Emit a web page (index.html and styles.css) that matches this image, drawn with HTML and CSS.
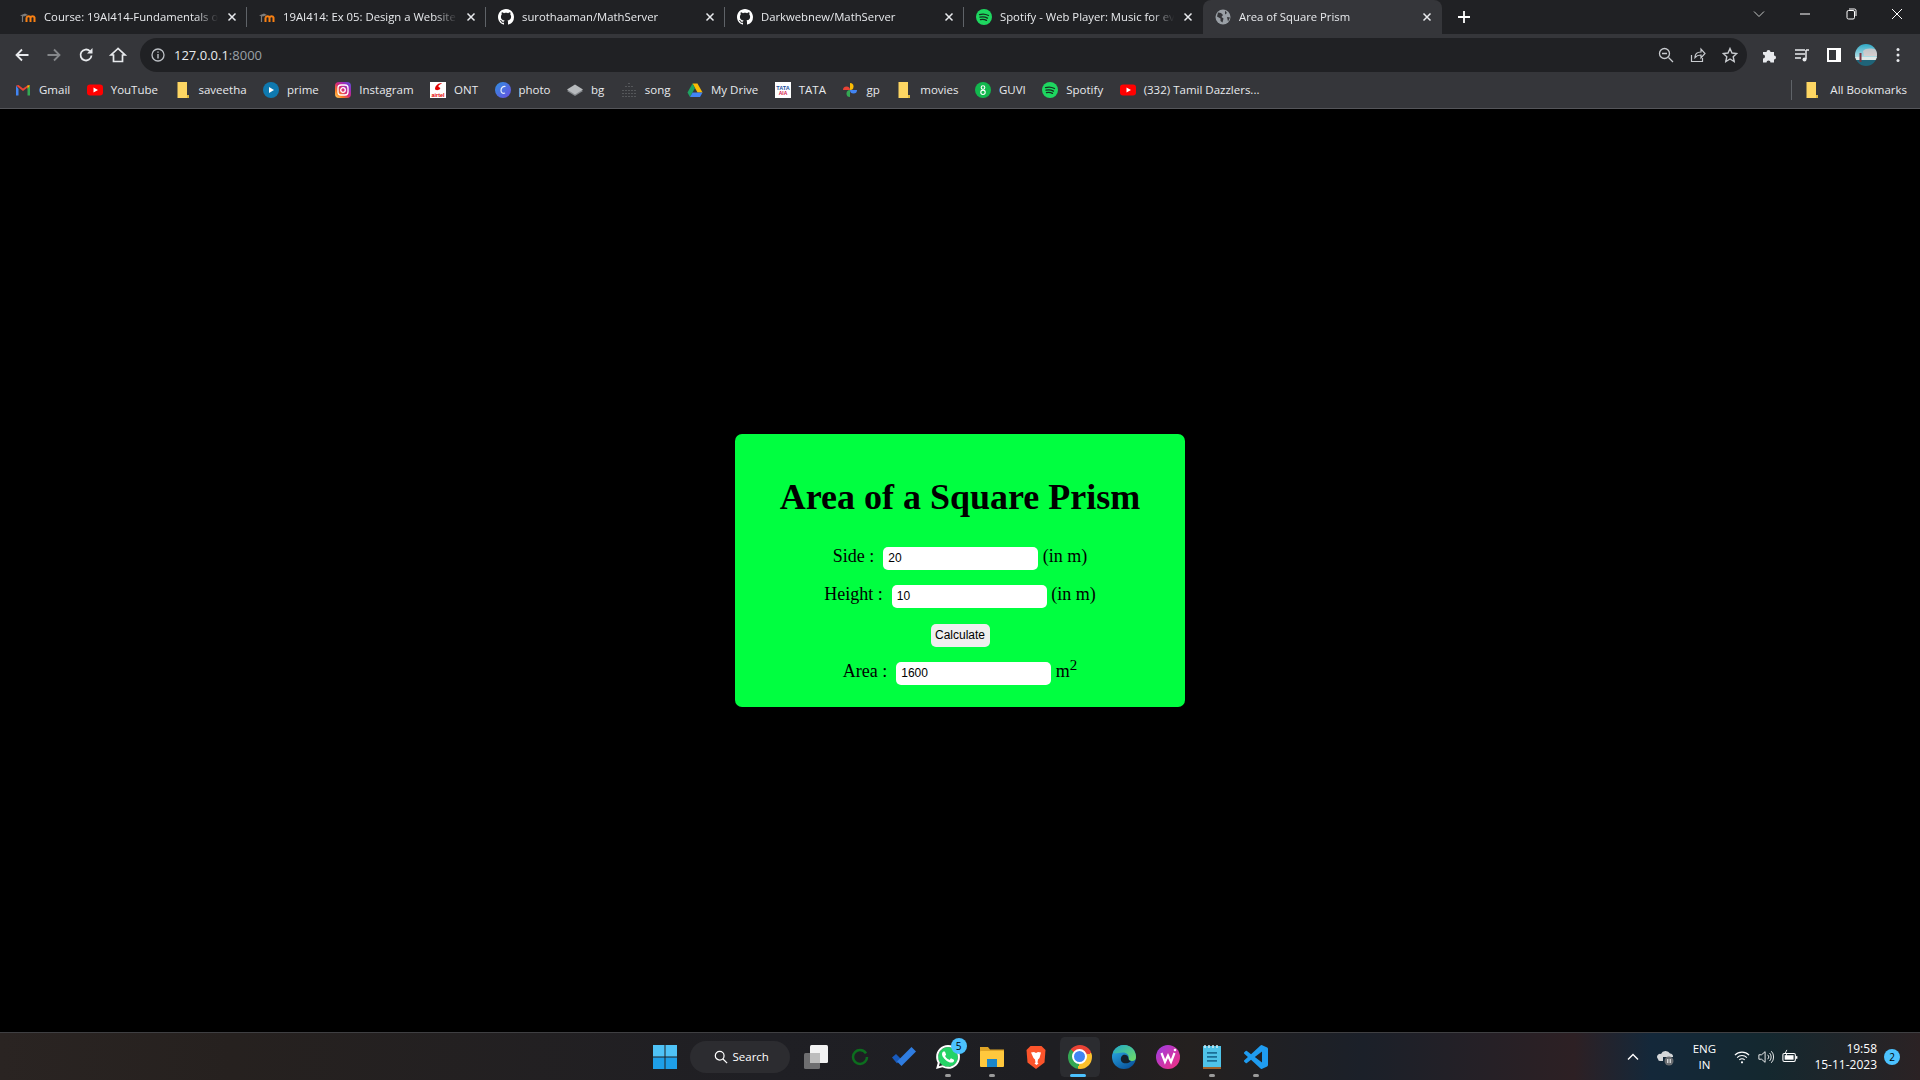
FILE: index.html
```html
<!DOCTYPE html>
<html lang="en">
<head>
    <meta charset="UTF-8">
    <title>Area of Square Prism</title>
    <link rel="stylesheet" href="styles.css">
</head>
<body>
    <!-- shared icons -->
    <svg class="sprite" width="0" height="0">
        <defs>
            <linearGradient id="g-photo" x1="0" y1="0" x2="1" y2="1"><stop offset="0" stop-color="#2f8fe0"/><stop offset="1" stop-color="#6a4fe0"/></linearGradient>
            <linearGradient id="g-wps" x1="0" y1="0" x2="1" y2="1"><stop offset="0" stop-color="#9a3de6"/><stop offset="1" stop-color="#f52f7c"/></linearGradient>
            <linearGradient id="g-edge" x1="0" y1="0" x2="0.6" y2="1"><stop offset="0" stop-color="#2fb6ee"/><stop offset="1" stop-color="#0b57a0"/></linearGradient>
            <linearGradient id="g-edge-top" x1="0" y1="0" x2="1" y2="1"><stop offset="0" stop-color="#1fa8c9"/><stop offset="1" stop-color="#72de62"/></linearGradient>
            <linearGradient id="g-sky" x1="0" y1="0" x2="0" y2="1"><stop offset="0" stop-color="#2fa9c6"/><stop offset="1" stop-color="#b9e0e6"/></linearGradient>
            <clipPath id="c-avatar"><circle cx="11" cy="11" r="11"/></clipPath>
        </defs>
        <symbol id="i-close" viewBox="0 0 16 16"><path d="M4.500 4.500l7 7M11.500 4.500l-7 7" fill="none" stroke="#e8eaed" stroke-width="1.500"/></symbol>
        <symbol id="i-moodle" viewBox="0 0 16 16"><path d="M0 6.500l5-2 3 1.500-4 1.500z" fill="#7d7d7d"/><path d="M2.500 7v6" stroke="#7d7d7d" stroke-width="1.200"/><path d="M6.500 13V8.500M6.500 8.500c1-1.800 3.500-1.800 4 0V13M10.500 8.500c.8-1.800 3.500-1.800 4 0V13" fill="none" stroke="#f98012" stroke-width="2"/></symbol>
        <symbol id="i-github" viewBox="0 0 16 16"><path fill="#fff" d="M8 0C3.580 0 0 3.580 0 8c0 3.540 2.290 6.530 5.470 7.590.4.070.55-.17.55-.38 0-.19-.01-.82-.01-1.490-2.010.37-2.530-.49-2.690-.94-.09-.23-.48-.94-.82-1.130-.28-.15-.68-.52-.01-.53.63-.01 1.080.58 1.230.82.72 1.210 1.870.87 2.330.66.07-.52.28-.87.51-1.070-1.780-.2-3.640-.89-3.640-3.950 0-.87.31-1.590.82-2.150-.08-.2-.36-1.020.08-2.120 0 0 .67-.21 2.200.82.64-.18 1.320-.27 2-.27.68 0 1.360.09 2 .27 1.530-1.040 2.200-.82 2.200-.82.44 1.100.16 1.920.08 2.120.51.56.82 1.270.82 2.150 0 3.070-1.870 3.750-3.650 3.950.29.25.54.73.54 1.480 0 1.070-.01 1.930-.01 2.200 0 .21.15.46.55.38A8.013 8.013 0 0016 8c0-4.420-3.580-8-8-8z"/></symbol>
        <symbol id="i-spotify" viewBox="0 0 16 16"><circle cx="8" cy="8" r="8" fill="#1ed760"/><path d="M3.500 5.600c3-.9 6.300-.6 9 .9M4 8.200c2.500-.7 5.200-.4 7.500.9M4.500 10.600c2-.5 4.200-.3 6 .8" fill="none" stroke="#14301f" stroke-width="1.300" stroke-linecap="round"/></symbol>
        <symbol id="i-folder" viewBox="0 0 16 16"><path d="M2.500 0h9.500v13l2 1.500v1.500H2.500z" fill="#fdd663"/><path d="M12 13h2v3h-2z" fill="#e0b93f"/></symbol>
        <symbol id="i-youtube" viewBox="0 0 16 16"><rect y="2.500" width="16" height="11" rx="3" fill="#f00"/><path d="M6.500 5.500L11 8l-4.500 2.500z" fill="#fff"/></symbol>
    </svg>

    <div class="tabstrip">
        <div class="tab">
            <svg class="tab-icon"><use href="#i-moodle"/></svg>
            <span class="tab-title">Course: 19AI414-Fundamentals of Web</span>
            <svg class="tab-close"><use href="#i-close"/></svg>
        </div>
        <div class="tab">
            <svg class="tab-icon"><use href="#i-moodle"/></svg>
            <span class="tab-title">19AI414: Ex 05: Design a Website for</span>
            <svg class="tab-close"><use href="#i-close"/></svg>
        </div>
        <div class="tab">
            <svg class="tab-icon"><use href="#i-github"/></svg>
            <span class="tab-title">surothaaman/MathServer</span>
            <svg class="tab-close"><use href="#i-close"/></svg>
        </div>
        <div class="tab">
            <svg class="tab-icon"><use href="#i-github"/></svg>
            <span class="tab-title">Darkwebnew/MathServer</span>
            <svg class="tab-close"><use href="#i-close"/></svg>
        </div>
        <div class="tab tab-before-active">
            <svg class="tab-icon"><use href="#i-spotify"/></svg>
            <span class="tab-title">Spotify - Web Player: Music for everyone</span>
            <svg class="tab-close"><use href="#i-close"/></svg>
        </div>
        <div class="tab tab-active">
            <svg class="tab-icon" viewBox="0 0 16 16"><circle cx="8" cy="8" r="7.500" fill="#9aa0a6"/><path d="M3 3.500l3 .5 2 2-1.500 2 2 1.500-1 4-2-1.500v-2.500L2 7.500zM10 1.500l2 2.500-2 1.500zM12 8l3 .5-2 4z" fill="#35363a"/></svg>
            <span class="tab-title">Area of Square Prism</span>
            <svg class="tab-close"><use href="#i-close"/></svg>
        </div>
        <svg class="new-tab" viewBox="0 0 16 16"><path d="M8 2v12M2 8h12" stroke="#fff" stroke-width="1.800"/></svg>
        <div class="window-controls">
            <svg class="win-btn" viewBox="0 0 12 12"><path d="M1 3.500l5 5 5-5" fill="none" stroke="#c4c7c5" stroke-width="1"/></svg>
            <svg class="win-btn" viewBox="0 0 12 12"><path d="M1 6h10" stroke="#fff" stroke-width="1"/></svg>
            <svg class="win-btn" viewBox="0 0 12 12"><rect x="2" y="2.500" width="7.500" height="8.500" rx="1.500" fill="none" stroke="#fff"/><path d="M4 1h5.500A1.500 1.500 0 0 1 11 2.500V8" fill="none" stroke="#fff"/></svg>
            <svg class="win-btn" viewBox="0 0 12 12"><path d="M1 1l10 10M11 1L1 11" stroke="#fff" stroke-width="1"/></svg>
        </div>
    </div>

    <div class="toolbar">
        <div class="nav-buttons">
            <svg class="tool-icon" viewBox="0 0 16 16"><path d="M14.500 8H2.500M8 2.500L2.500 8 8 13.500" fill="none" stroke="#e8eaed" stroke-width="1.800"/></svg>
            <svg class="tool-icon" viewBox="0 0 16 16"><path d="M1.500 8h12M8 2.500L13.500 8 8 13.500" fill="none" stroke="#85878a" stroke-width="1.800"/></svg>
            <svg class="tool-icon" viewBox="0 0 16 16"><path d="M13.500 8.500a5.500 5.500 0 1 1-1.600-4.400" fill="none" stroke="#e8eaed" stroke-width="1.800"/><path d="M14.500 1v5.500H9z" fill="#e8eaed"/></svg>
            <svg class="tool-icon" viewBox="0 0 16 16"><path d="M8 1.500L1 8h2.500v6.500h9V8H15z" fill="none" stroke="#e8eaed" stroke-width="1.700"/></svg>
        </div>
        <div class="omnibox">
            <svg class="info-icon" viewBox="0 0 14 14"><circle cx="7" cy="7" r="6" fill="none" stroke="#bdc1c6" stroke-width="1.300"/><path d="M7 6v4.500M7 3.500v1.300" stroke="#bdc1c6" stroke-width="1.400"/></svg>
            <span class="url">127.0.0.1<span class="url-port">:8000</span></span>
            <div class="omni-actions">
                <svg class="omni-icon" viewBox="0 0 16 16"><circle cx="6.500" cy="6.500" r="5" fill="none" stroke="#c8cbcf" stroke-width="1.300"/><path d="M4 6.500h5M10.500 10.500l4.500 4.500" stroke="#c8cbcf" stroke-width="1.300"/></svg>
                <svg class="omni-icon" viewBox="0 0 16 16"><path d="M1.500 8v6.500h11V11" fill="none" stroke="#c8cbcf" stroke-width="1.200"/><path d="M5 10.500c0-3.500 2.500-5.500 6-5.500V2l4 4.500L11 11V8c-2.500 0-4.500.7-6 2.500z" fill="none" stroke="#c8cbcf" stroke-width="1.200"/></svg>
                <svg class="omni-icon" viewBox="0 0 16 16"><path d="M8 1.500l2 4.500 4.800.5-3.600 3.200 1 4.800L8 12l-4.200 2.500 1-4.800L1.200 6.500 6 6z" fill="none" stroke="#c8cbcf" stroke-width="1.400"/></svg>
            </div>
        </div>
        <div class="extensions">
            <svg class="tool-icon" viewBox="0 0 16 16"><path d="M1 5h3.500a2 2 0 1 1 4 0H12v3.500a2 2 0 1 1 0 4V15.500H8.500a2 2 0 1 0-4 0H1V11.500a2 2 0 1 0 0-4z" fill="#e8eaed"/></svg>
            <svg class="tool-icon" viewBox="0 0 16 16"><path d="M1 3h10M1 7h10M1 11h6" stroke="#e8eaed" stroke-width="1.500"/><path d="M12 3v9" stroke="#e8eaed" stroke-width="1.500"/><circle cx="10.500" cy="12.500" r="2" fill="#e8eaed"/><path d="M12 3h3" stroke="#e8eaed" stroke-width="1.500"/></svg>
            <svg class="tool-icon" viewBox="0 0 16 16"><path fill-rule="evenodd" d="M1 1h14v14H1zM3 3v10h7V3z" fill="#fff"/></svg>
            <svg class="avatar" viewBox="0 0 22 22"><g clip-path="url(#c-avatar)"><rect width="22" height="14" fill="url(#g-sky)"/><path d="M8 7c3-3 8-3 14-1v6H9z" fill="#e9c9c4" opacity=".7"/><rect y="13" width="22" height="3" fill="#dfe8e6"/><rect y="16" width="22" height="6" fill="#1f6478"/><rect x="4.500" y="9" width="2" height="9" fill="#7a3440"/></g></svg>
            <svg class="tool-icon" viewBox="0 0 16 16"><circle cx="8" cy="2.500" r="1.500" fill="#e8eaed"/><circle cx="8" cy="8" r="1.500" fill="#e8eaed"/><circle cx="8" cy="13.500" r="1.500" fill="#e8eaed"/></svg>
        </div>
    </div>

    <div class="bookmarks">
        <div class="mark">
            <svg class="mark-icon" viewBox="0 0 16 16"><path d="M1 3.500v10h2.500V7z" fill="#4285f4"/><path d="M12.500 13.500H15v-10L12.500 7z" fill="#34a853"/><path d="M1 3.500L8 9l7-5.500-2.500 0L8 6.500 3.500 3z" fill="#ea4335"/><path d="M12.500 3.200L15 3.500 12.500 7z" fill="#fbbc04"/></svg>
            <span>Gmail</span>
        </div>
        <div class="mark"><svg class="mark-icon"><use href="#i-youtube"/></svg><span>YouTube</span></div>
        <div class="mark"><svg class="mark-icon"><use href="#i-folder"/></svg><span>saveetha</span></div>
        <div class="mark">
            <svg class="mark-icon" viewBox="0 0 16 16"><circle cx="8" cy="8" r="8" fill="#0f79af"/><path d="M6 5l5 3-5 3z" fill="#fff"/></svg>
            <span>prime</span>
        </div>
        <div class="mark">
            <div class="instagram"><svg viewBox="0 0 16 16"><rect x="3" y="3" width="10" height="10" rx="3" fill="none" stroke="#fff" stroke-width="1.300"/><circle cx="8" cy="8" r="2.300" fill="none" stroke="#fff" stroke-width="1.300"/></svg></div>
            <span>Instagram</span>
        </div>
        <div class="mark">
            <svg class="mark-icon" viewBox="0 0 16 16"><rect width="16" height="16" fill="#fff"/><path d="M5 7c0-3 3-6 7-6-1 1.500-4 2-3.500 3.500.5 1.500 2.500.5 1.500 2.500-1 1.500-5 1.500-5 0z" fill="#e40000"/><text x="8" y="15" class="logo-text logo-airtel">airtel</text></svg>
            <span>ONT</span>
        </div>
        <div class="mark">
            <svg class="mark-icon" viewBox="0 0 16 16"><circle cx="8" cy="8" r="8" fill="url(#g-photo)"/><path d="M10.500 4.500C8 3.800 6 6 6 8.500s2 3.500 4 2.500" fill="none" stroke="#e8eefc" stroke-width="1.200"/></svg>
            <span>photo</span>
        </div>
        <div class="mark">
            <svg class="mark-icon" viewBox="0 0 16 16"><path d="M8 4l8 5-8 5-8-5z" fill="#85888c"/><path d="M8 2.500l8 5-8 5-8-5z" fill="#b7babd"/></svg>
            <span>bg</span>
        </div>
        <div class="mark">
            <svg class="mark-icon" viewBox="0 0 16 16"><path d="M8 1v1M5 4v1M8 4v1M11 4v1M2 8v1M5 8v1M8 8v1M11 8v1M14 8v1M2 11v1M5 11v1M8 11v1M11 11v1M14 11v1M2 14v1M5 14v1M8 14v1M11 14v1M14 14v1" stroke="#55575a" stroke-width="2"/></svg>
            <span>song</span>
        </div>
        <div class="mark">
            <svg class="mark-icon" viewBox="0 0 16 16"><path d="M5.500 1.500h5L15.500 10.500h-5z" fill="#fbbc04"/><path d="M5.500 1.500L.5 10.500 3 15l5-9z" fill="#1ea362"/><path d="M3 15h10l2.500-4.500h-10z" fill="#4285f4"/></svg>
            <span>My Drive</span>
        </div>
        <div class="mark">
            <svg class="mark-icon" viewBox="0 0 16 16"><rect width="16" height="16" fill="#fff"/><text x="8" y="7.500" class="logo-text logo-tata">TATA</text><text x="8" y="13" class="logo-text logo-aia">AIA</text></svg>
            <span>TATA</span>
        </div>
        <div class="mark">
            <svg class="mark-icon" viewBox="0 0 16 16"><path d="M8 8H1a3.500 3.500 0 0 1 7 0z" fill="#ea4335"/><path d="M8 8H1a3.500 3.500 0 0 1 7 0z" fill="#fbbc04" transform="rotate(90 8 8)"/><path d="M8 8H1a3.500 3.500 0 0 1 7 0z" fill="#4285f4" transform="rotate(180 8 8)"/><path d="M8 8H1a3.500 3.500 0 0 1 7 0z" fill="#34a853" transform="rotate(270 8 8)"/></svg>
            <span>gp</span>
        </div>
        <div class="mark"><svg class="mark-icon"><use href="#i-folder"/></svg><span>movies</span></div>
        <div class="mark">
            <svg class="mark-icon" viewBox="0 0 16 16"><circle cx="8" cy="8" r="8" fill="#12b84e"/><circle cx="8" cy="5.500" r="1.800" fill="none" stroke="#fff" stroke-width="1.100"/><circle cx="8" cy="10.300" r="2.200" fill="none" stroke="#fff" stroke-width="1.100"/></svg>
            <span>GUVI</span>
        </div>
        <div class="mark"><svg class="mark-icon"><use href="#i-spotify"/></svg><span>Spotify</span></div>
        <div class="mark"><svg class="mark-icon"><use href="#i-youtube"/></svg><span>(332) Tamil Dazzlers...</span></div>
        <div class="all-bookmarks">
            <svg class="mark-icon"><use href="#i-folder"/></svg>
            <span>All Bookmarks</span>
        </div>
    </div>

    <main class="page">
        <form class="card">
            <h1 class="card-title">Area of a Square Prism</h1>
            <div class="row">Side : &nbsp;<input class="field" type="text" value="20"> (in m)</div>
            <div class="row">Height : &nbsp;<input class="field" type="text" value="10"> (in m)</div>
            <div class="row row-button"><button class="calc-btn" type="button">Calculate</button></div>
            <div class="row">Area : &nbsp;<input class="field" type="text" value="1600"> m<sup class="power">2</sup></div>
        </form>
    </main>

    <footer class="taskbar">
        <div></div>
        <div class="task-center">
            <div class="task-item">
                <svg class="task-icon" viewBox="0 0 24 24"><rect width="11.500" height="11.500" fill="#4fc3f7"/><rect x="12.500" width="11.500" height="11.500" fill="#4fc3f7"/><rect y="12.500" width="11.500" height="11.500" fill="#1e9fe8"/><rect x="12.500" y="12.500" width="11.500" height="11.500" fill="#1e9fe8"/></svg>
            </div>
            <div class="search-pill">
                <svg class="search-icon" viewBox="0 0 16 16"><circle cx="6.500" cy="6.500" r="5" fill="none" stroke="#fff" stroke-width="1.400"/><path d="M10 10l5 5" stroke="#fff" stroke-width="1.400"/></svg>
                <span>Search</span>
            </div>
            <div class="task-item">
                <svg class="task-icon" viewBox="0 0 24 24"><rect y="8" width="16" height="16" rx="1.500" fill="#6e6e70"/><rect x="6" width="18" height="18" rx="1.500" fill="#f3f3f3"/><rect x="6" y="8" width="10" height="10" fill="#bdbdbd"/></svg>
            </div>
            <div class="task-item">
                <svg class="task-icon" viewBox="0 0 24 24"><circle cx="12" cy="12" r="7" fill="none" stroke="#0c6e1e" stroke-width="2.500" stroke-dasharray="40 4"/></svg>
            </div>
            <div class="task-item">
                <svg class="task-icon" viewBox="0 0 24 24"><path d="M0 12.500L4 9l5 5-4 4.500z" fill="#185abd"/><path d="M5 18.500L19.500 4 24 8.500 9.500 23 5 18.500z" fill="#2f7de1" transform="translate(0 -2)"/></svg>
            </div>
            <div class="task-item">
                <svg class="task-icon" viewBox="0 0 24 24"><circle cx="12" cy="12" r="10" fill="#25d366"/><path fill="#fff" d="M17.472 14.382c-.297-.149-1.758-.867-2.030-.967-.273-.099-.471-.148-.67.150-.197.297-.767.966-.94 1.164-.173.199-.347.223-.644.075-.297-.15-1.255-.463-2.390-1.475-.883-.788-1.480-1.761-1.653-2.059-.173-.297-.018-.458.130-.606.134-.133.298-.347.446-.52.149-.174.198-.298.298-.497.099-.198.050-.371-.025-.52-.075-.149-.669-1.612-.916-2.207-.242-.579-.487-.5-.669-.51-.173-.008-.371-.01-.57-.01-.198 0-.52.074-.792.372-.272.297-1.040 1.016-1.040 2.479 0 1.462 1.065 2.875 1.213 3.074.149.198 2.096 3.200 5.077 4.487.709.306 1.262.489 1.694.625.712.227 1.360.195 1.871.118.571-.085 1.758-.719 2.006-1.413.248-.694.248-1.289.173-1.413-.074-.124-.272-.198-.57-.347m-5.421 7.403h-.004a9.870 9.870 0 01-5.031-1.378l-.361-.214-3.741.982.998-3.648-.235-.374a9.860 9.860 0 01-1.510-5.260c.001-5.450 4.436-9.884 9.888-9.884 2.640 0 5.122 1.030 6.988 2.898a9.825 9.825 0 012.893 6.994c-.003 5.450-4.437 9.884-9.885 9.884m8.413-18.297A11.815 11.815 0 0012.050 0C5.495 0 .16 5.335.157 11.892c0 2.096.547 4.142 1.588 5.945L.057 24l6.305-1.654a11.882 11.882 0 005.683 1.448h.005c6.554 0 11.890-5.335 11.893-11.893a11.821 11.821 0 00-3.480-8.413z"/></svg>
                <span class="task-badge">5</span>
                <i class="run-dot"></i>
            </div>
            <div class="task-item">
                <svg class="task-icon" viewBox="0 0 24 24"><path d="M0 2h8l2 2.500H24V8H0z" fill="#e0a526"/><rect y="6" width="24" height="16" rx="1" fill="#ffc83d"/><rect x="7" y="14" width="10" height="8" fill="#1b86c9"/></svg>
                <i class="run-dot"></i>
            </div>
            <div class="task-item">
                <svg class="task-icon" viewBox="0 0 24 24"><path d="M6.500 1h11L21.500 5l-1 12.500L12 24l-8.500-6.500-1-12.500z" fill="#fb542b"/><path d="M7 7.500l3-.5 2 1 2-1 3 .5-1.500 5.500-1.500 1.500-.5 3 1 1-2 1.500-2-1.500 1-1-.5-3-1.500-1.500z" fill="#fff"/></svg>
            </div>
            <div class="task-item task-item-active">
                <div class="chrome"><div class="chrome-eye"></div></div>
                <i class="run-bar"></i>
            </div>
            <div class="task-item">
                <svg class="task-icon" viewBox="0 0 24 24"><circle cx="12" cy="12" r="12" fill="url(#g-edge)"/><path d="M1 8C3 3 7 0 12 0c7 0 12 5.500 12 12 0 2.500-1.500 4-4 4-2 0-3.500-1-3.500-2.500 1-3.500-2-6-5.500-6C7 7.500 3 9 1 8z" fill="url(#g-edge-top)"/><path d="M16.500 13.500c0 1.500 1 2.500 2.500 2.500-2 2.500-6 3-8.500 1.500-2.500-2-2-6 .5-7.500 2.500-1 5.500.5 5.500 3.500z" fill="#14202c"/></svg>
            </div>
            <div class="task-item">
                <svg class="task-icon" viewBox="0 0 24 24"><circle cx="12" cy="12" r="12" fill="url(#g-wps)"/><path d="M5.500 8l3.500 9 3-6.500 3 6.500 3.500-9" fill="none" stroke="#fff" stroke-width="2.200"/><circle cx="19" cy="5" r="1.300" fill="#fff"/></svg>
            </div>
            <div class="task-item">
                <svg class="task-icon" viewBox="0 0 24 24"><rect x="3" y="1" width="18" height="23" fill="#4fc3e8"/><rect x="3" y="22" width="18" height="2" fill="#a0602a"/><path d="M7 7h10v1.800H7zM7 11h10v1.800H7zM7 15h10v1.800H7z" fill="#1b6f96"/><path d="M5 0v3M9 0v3M13 0v3M17 0v3" stroke="#cfeef8" stroke-width="1.500"/></svg>
                <i class="run-dot"></i>
            </div>
            <div class="task-item">
                <svg class="task-icon" viewBox="0 0 24 24"><path fill="#1f9cf0" d="M23.150 2.587L18.210.21a1.494 1.494 0 0 0-1.705.29l-9.460 8.630-4.120-3.128a.999.999 0 0 0-1.276.057L.327 7.261A1 1 0 0 0 .326 8.740L3.899 12 .326 15.260a1 1 0 0 0 .001 1.479L1.650 17.940a.999.999 0 0 0 1.276.057l4.120-3.128 9.460 8.630a1.492 1.492 0 0 0 1.704.29l4.942-2.377A1.500 1.500 0 0 0 24 20.060V3.939a1.500 1.500 0 0 0-.85-1.352zm-5.146 14.861L10.826 12l7.178-5.448v10.896z"/></svg>
                <i class="run-dot"></i>
            </div>
        </div>
        <div class="tray">
            <svg class="tray-chevron" viewBox="0 0 12 12"><path d="M1 8.500l5-5 5 5" fill="none" stroke="#fff" stroke-width="1.400"/></svg>
            <svg class="tray-cloud" viewBox="0 0 18 18"><path d="M1 11a3 3 0 0 1 3-5 5 5 0 0 1 9-.5A3 3 0 0 1 16 9H6v4H3a2 2 0 0 1-2-2z" fill="#d5d7d9"/><circle cx="12" cy="13" r="4.500" fill="#6b6e72"/><path d="M10.800 11v4M13.200 11v4" stroke="#fff"/></svg>
            <div class="tray-lang"><span>ENG</span><span>IN</span></div>
            <svg class="tray-icon" viewBox="0 0 18 18"><path d="M1 7a11 11 0 0 1 16 0M3.500 9.700a7.500 7.500 0 0 1 11 0M6 12.300a4 4 0 0 1 6 0" fill="none" stroke="#fff" stroke-width="1.200"/><circle cx="9" cy="15" r="1.200" fill="#fff"/></svg>
            <svg class="tray-icon" viewBox="0 0 18 18"><path d="M1 6.500h3L8 3v12l-4-3.500H1z" fill="none" stroke="#fff" stroke-width="1"/><path d="M11 6.500a3.500 3.500 0 0 1 0 5M13 4.500a6.500 6.500 0 0 1 0 9M15 2.500a9.500 9.500 0 0 1 0 13" fill="none" stroke="#fff" stroke-width="1"/></svg>
            <svg class="tray-icon" viewBox="0 0 18 18"><rect x="1" y="5" width="14" height="9" rx="1.500" fill="none" stroke="#fff" stroke-width="1.200"/><rect x="3" y="7" width="10" height="5" fill="#fff"/><rect x="15.500" y="8" width="1.800" height="3" fill="#fff"/><path d="M5.500 1L3.500 5h2L4.500 8" fill="none" stroke="#fff"/></svg>
            <div class="tray-clock"><span>19:58</span><span>15-11-2023</span></div>
            <span class="tray-badge">2</span>
        </div>
    </footer>
</body>
</html>
```

FILE: styles.css
```css
/* General Styles */
* {
  box-sizing: border-box;
}

html, body {
  height: 100%;
}

body {
  margin: 0;
  display: flex;
  flex-direction: column;
  background-color: #000000;
  font-family: "Open Sans", "Noto Sans", sans-serif;
  color: #e8eaed;
  overflow: hidden;
}

.sprite {
  position: absolute;
}

/* Tab strip */
.tabstrip {
  height: 34px;
  display: flex;
  padding-left: 8px;
  background-color: #202124;
}

.tab {
  position: relative;
  width: 239px;
  height: 34px;
  flex-shrink: 0;
  display: flex;
  align-items: center;
  padding: 0 7px 0 12px;
  font-size: 11.300px;
}

.tab::after {
  content: "";
  position: absolute;
  right: 0;
  top: 7px;
  width: 1px;
  height: 20px;
  background-color: #5f6368;
}

.tab-before-active::after {
  display: none;
}

.tab-active {
  background-color: #35363a;
  border-radius: 8px 8px 0 0;
}

.tab-active::after {
  display: none;
}

.tab-icon {
  width: 16px;
  height: 16px;
  flex-shrink: 0;
  margin-right: 8px;
}

.tab-title {
  flex: 1;
  padding-bottom: 2px;
  overflow: hidden;
  white-space: nowrap;
  -webkit-mask-image: linear-gradient(to right, #000 85%, transparent 98%);
  mask-image: linear-gradient(to right, #000 85%, transparent 98%);
}

.tab-close {
  width: 16px;
  height: 16px;
  flex-shrink: 0;
  margin-left: 2px;
}

.new-tab {
  width: 16px;
  height: 16px;
  margin: 9px 0 0 14px;
}

.window-controls {
  margin-left: auto;
  display: flex;
  height: 28px;
  align-items: center;
}

.win-btn {
  width: 46px;
  height: 12px;
}

/* Toolbar */
.toolbar {
  height: 38px;
  display: flex;
  align-items: flex-end;
  padding-left: 6px;
  background-color: #35363a;
}

.nav-buttons {
  display: flex;
  height: 34px;
  align-items: center;
}

.nav-buttons .tool-icon {
  width: 32px;
}

.tool-icon {
  width: 16px;
  height: 16px;
}

.omnibox {
  flex: 1;
  height: 34px;
  margin-left: 6px;
  display: flex;
  align-items: center;
  padding-left: 11px;
  border-radius: 17px;
  background-color: #202124;
  font-size: 13px;
}

.info-icon {
  width: 14px;
  height: 14px;
  margin-right: 9px;
}

.url-port {
  color: #9aa0a6;
}

.omni-actions {
  margin-left: auto;
  display: flex;
  gap: 16px;
  padding-right: 9px;
}

.omni-icon {
  width: 16px;
  height: 16px;
}

.extensions {
  width: 173px;
  height: 34px;
  display: flex;
  align-items: center;
  padding-left: 15px;
  gap: 16px;
}

.avatar {
  width: 22px;
  height: 22px;
  margin: 0 -3px;
}

/* Bookmarks bar */
.bookmarks {
  height: 37px;
  display: flex;
  align-items: center;
  padding: 0 0 1px 15px;
  gap: 16.500px;
  background-color: #35363a;
  border-bottom: 1px solid #55565a;
  font-size: 11.500px;
}

.mark {
  display: flex;
  align-items: center;
  gap: 8px;
  white-space: nowrap;
}

.mark-icon {
  width: 16px;
  height: 16px;
  flex-shrink: 0;
}

.logo-text {
  font-family: "Liberation Sans", sans-serif;
  font-weight: bold;
  text-anchor: middle;
}

.logo-airtel {
  font-size: 5.500px;
  fill: #e40000;
}

.logo-tata {
  font-size: 5.500px;
  fill: #1d4fa0;
}

.logo-aia {
  font-size: 5px;
  fill: #d31145;
}

.instagram {
  width: 16px;
  height: 16px;
  border-radius: 4px;
  background: linear-gradient(45deg, #feda75, #fa7e1e 25%, #d62976 50%, #962fbf 75%, #4f5bd5);
}

.all-bookmarks {
  margin-left: auto;
  height: 20px;
  display: flex;
  align-items: center;
  gap: 10px;
  padding: 0 13px 0 12px;
  border-left: 1px solid #5f6368;
  white-space: nowrap;
}

/* Page */
.page {
  flex: 1;
  display: flex;
  align-items: center;
  justify-content: center;
  background-color: #000000;
}

.card {
  width: 450px;
  height: 273px;
  padding-top: 43px;
  border-radius: 7px;
  background-color: #00ff40;
  color: #000000;
  font-family: "Liberation Serif", serif;
  font-size: 18px;
}

.card-title {
  margin: 0 0 27px;
  height: 41px;
  line-height: 41px;
  font-size: 36px;
  text-align: center;
}

.row {
  height: 23px;
  margin-bottom: 15px;
  line-height: 23px;
  text-align: center;
}

.row-button {
  margin-top: 16px;
}

.field {
  width: 155px;
  height: 23px;
  padding: 1px 5px;
  border: none;
  border-radius: 5px;
  background-color: #ffffff;
  font-family: "Liberation Sans", sans-serif;
  font-size: 12px;
}

.calc-btn {
  width: 59px;
  height: 23px;
  padding: 0;
  border: none;
  border-radius: 5px;
  background-color: #efefef;
  color: #000000;
  font-family: "Liberation Sans", sans-serif;
  font-size: 12px;
}

.power {
  line-height: 0;
  font-size: 15px;
}

/* Taskbar */
.taskbar {
  height: 48px;
  display: grid;
  grid-template-columns: 1fr auto 1fr;
  align-items: center;
  border-top: 1px solid #3f3f42;
  background: linear-gradient(to right, #2a2422 0, #26211f 12%, #1f1f24 40%, #1e1e22 55%, #24201f 62%, #1b2029 71%, #2d2024 82%, #14283a 86%, #14282f 92%, #2b2224 100%);
  font-size: 11.500px;
  color: #ffffff;
}

.task-center {
  display: flex;
  align-items: center;
}

.task-item {
  position: relative;
  width: 44px;
  height: 40px;
  display: flex;
  align-items: center;
  justify-content: center;
}

.task-item-active {
  border-left: 2px solid transparent;
  border-right: 2px solid transparent;
  border-radius: 6px;
  background-color: #2b2c30;
  background-clip: padding-box;
}

.task-icon {
  width: 24px;
  height: 24px;
}

.search-pill {
  width: 100px;
  height: 32px;
  margin: 0 4px 0 3px;
  display: flex;
  align-items: center;
  gap: 5px;
  padding-left: 24px;
  border-radius: 16px;
  background-color: #2c2c30;
}

.search-icon {
  width: 14px;
  height: 14px;
}

.task-badge {
  position: absolute;
  top: 1px;
  right: 3px;
  width: 16px;
  height: 16px;
  border-radius: 50%;
  background-color: #4cc2ff;
  color: #000000;
  font-size: 10px;
  line-height: 16px;
  text-align: center;
}

.run-dot {
  position: absolute;
  bottom: 0;
  left: 19px;
  width: 6px;
  height: 3px;
  border-radius: 2px;
  background-color: #9a9a9a;
}

.run-bar {
  position: absolute;
  bottom: 0;
  left: 10px;
  width: 16px;
  height: 3px;
  border-radius: 2px;
  background-color: #4cc2ff;
}

.chrome {
  width: 24px;
  height: 24px;
  display: flex;
  align-items: center;
  justify-content: center;
  border-radius: 50%;
  background: conic-gradient(from -50deg, #ea4335 0 120deg, #fbc02d 120deg 240deg, #34a853 240deg);
}

.chrome-eye {
  width: 15px;
  height: 15px;
  border: 2px solid #ffffff;
  border-radius: 50%;
  background-color: #4285f4;
}

.tray {
  display: flex;
  align-items: center;
  justify-self: end;
  height: 100%;
  padding-right: 20px;
}

.tray-chevron {
  width: 12px;
  height: 12px;
  margin-right: 18px;
}

.tray-cloud {
  width: 18px;
  height: 18px;
  margin-right: 9px;
}

.tray-lang {
  width: 40px;
  display: flex;
  flex-direction: column;
  align-items: center;
  line-height: 16px;
  margin-right: 10px;
}

.tray-icon {
  width: 16px;
  height: 16px;
  margin-right: 8px;
}

.tray-clock {
  display: flex;
  flex-direction: column;
  align-items: flex-end;
  font-size: 12px;
  line-height: 16px;
  margin-left: 8px;
  margin-right: 7px;
}

.tray-badge {
  width: 16px;
  height: 16px;
  border-radius: 50%;
  background-color: #4cc2ff;
  color: #000000;
  font-size: 10px;
  line-height: 16px;
  text-align: center;
}
```
